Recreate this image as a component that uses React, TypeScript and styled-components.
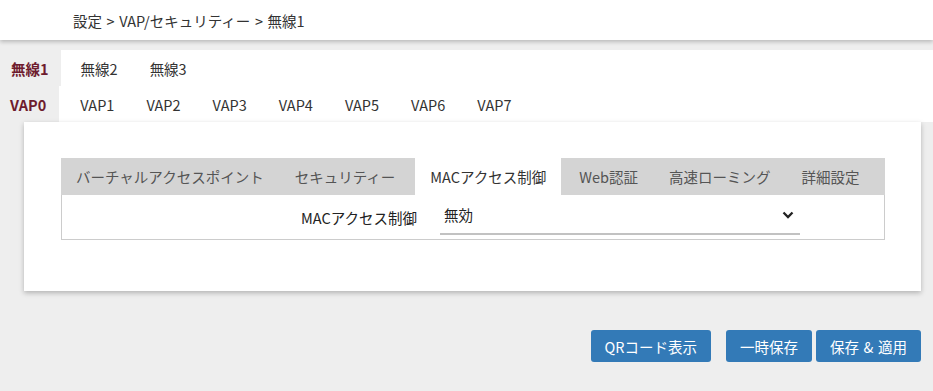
import * as React from "react";
import {useState} from "react";
import styled, {createGlobalStyle, css} from "styled-components";

const GlobalStyle = createGlobalStyle`
  html, body {
    margin: 0;
    padding: 0;
    background: #eeeeee;
    font-family: "Noto Sans CJK JP", "Open Sans", sans-serif;
    font-size: 14.5px;
    word-spacing: 1.3px;
    color: #333333;
  }
`

const Page = styled.div`
  width: 933px;
  min-height: 391px;
  display: flex;
  flex-direction: column;
`

const Header = styled.div`
  height: 40px;
  background: white;
  box-shadow: 0 2px 4px rgba(0, 0, 0, 0.22);
  display: flex;
  align-items: center;
  padding-left: 73px;
  position: relative;
  z-index: 2;
`

const Breadcrumb = styled.div`
  color: #333333;
`

const TabRows = styled.div`
  margin-top: 10px;
  display: flex;
  flex-direction: column;
`

const TabRow = styled.div`
  height: 36px;
  display: flex;
  background: white;
`

const RowTab = styled.div<{ active?: boolean, pad: string }>`
  display: flex;
  align-items: center;
  padding: ${({pad}) => pad};
  color: #333333;
  cursor: pointer;
  ${({active}) => active && css`
    background: #eeeeee;
    color: #6e1c2e;
    font-weight: 700;
  `}
`

const Card = styled.div`
  margin: 0 12px 0 24px;
  background: white;
  box-shadow: 0 2px 5px rgba(0, 0, 0, 0.25);
  padding: 36px 36px 51px 37px;
  position: relative;
`

const TabBar = styled.div`
  display: flex;
  height: 37px;
  background: #d4d4d4;
`

const InnerTab = styled.div<{ active?: boolean }>`
  display: flex;
  align-items: center;
  padding: 0 16px 0 15px;
  color: #555555;
  cursor: pointer;
  ${({active}) => active && css`
    background: white;
    color: #333333;
    padding: 0 15px;
    margin: 0 3px 0 4px;
  `}
`

const Panel = styled.div`
  height: 45px;
  border: 1px solid #cccccc;
  border-top: none;
  box-sizing: border-box;
  display: flex;
  align-items: center;
`

const FieldLabel = styled.div`
  width: 355px;
  text-align: right;
  margin-right: 23px;
  color: #222222;
`

const Select = styled.div`
  width: 360px;
  height: 36px;
  box-sizing: border-box;
  border-bottom: 2px solid #c2c2c2;
  display: flex;
  align-items: center;
  justify-content: space-between;
  padding: 0 6px 3px 4px;
  color: #222222;
`

const Chevron = () => <svg width={12} height={8} viewBox="0 0 12 8">
    <path d="M1.5 1.5L6 6L10.5 1.5" stroke="#222222" strokeWidth={2.3} fill="none"/>
</svg>

const ButtonBar = styled.div`
  display: flex;
  justify-content: flex-end;
  margin: 39px 12px 0 0;
`

const Button = styled.div<{ gap: number }>`
  height: 32px;
  padding: 0 14px;
  margin-left: ${({gap}) => gap}px;
  background: #337ab7;
  color: white;
  border-radius: 3px;
  display: flex;
  align-items: center;
  cursor: pointer;
`

const radios = ["無線1", "無線2", "無線3"]
const vaps = ["VAP0", "VAP1", "VAP2", "VAP3", "VAP4", "VAP5", "VAP6", "VAP7"]
const tabs = ["バーチャルアクセスポイント", "セキュリティー", "MACアクセス制御", "Web認証", "高速ローミング", "詳細設定"]

export default function App() {
    const [radio, setRadio] = useState(0)
    const [vap, setVap] = useState(0)
    const [tab, setTab] = useState(2)

    return <Page>
        <GlobalStyle/>
        <Header>
            <Breadcrumb>設定 &gt; VAP/セキュリティー &gt; 無線1</Breadcrumb>
        </Header>
        <TabRows>
            <TabRow>
                {radios.map((r, i) =>
                    <RowTab key={r} active={i == radio} pad={i == radio ? "0 12px 0 11px" : "0 12px 0 20px"}
                            onClick={() => setRadio(i)}>{r}</RowTab>)}
            </TabRow>
            <TabRow>
                {vaps.map((v, i) =>
                    <RowTab key={v} active={i == vap} pad={i == vap ? "0 13px 0 10px" : "0 11px 0 21px"}
                            onClick={() => setVap(i)}>{v}</RowTab>)}
            </TabRow>
        </TabRows>
        <Card>
            <TabBar>
                {tabs.map((t, i) =>
                    <InnerTab key={t} active={i == tab} onClick={() => setTab(i)}>{t}</InnerTab>)}
            </TabBar>
            <Panel>
                <FieldLabel>MACアクセス制御</FieldLabel>
                <Select>
                    <span>無効</span>
                    <Chevron/>
                </Select>
            </Panel>
        </Card>
        <ButtonBar>
            <Button gap={0}>QRコード表示</Button>
            <Button gap={15}>一時保存</Button>
            <Button gap={4}>保存 &amp; 適用</Button>
        </ButtonBar>
    </Page>
}
